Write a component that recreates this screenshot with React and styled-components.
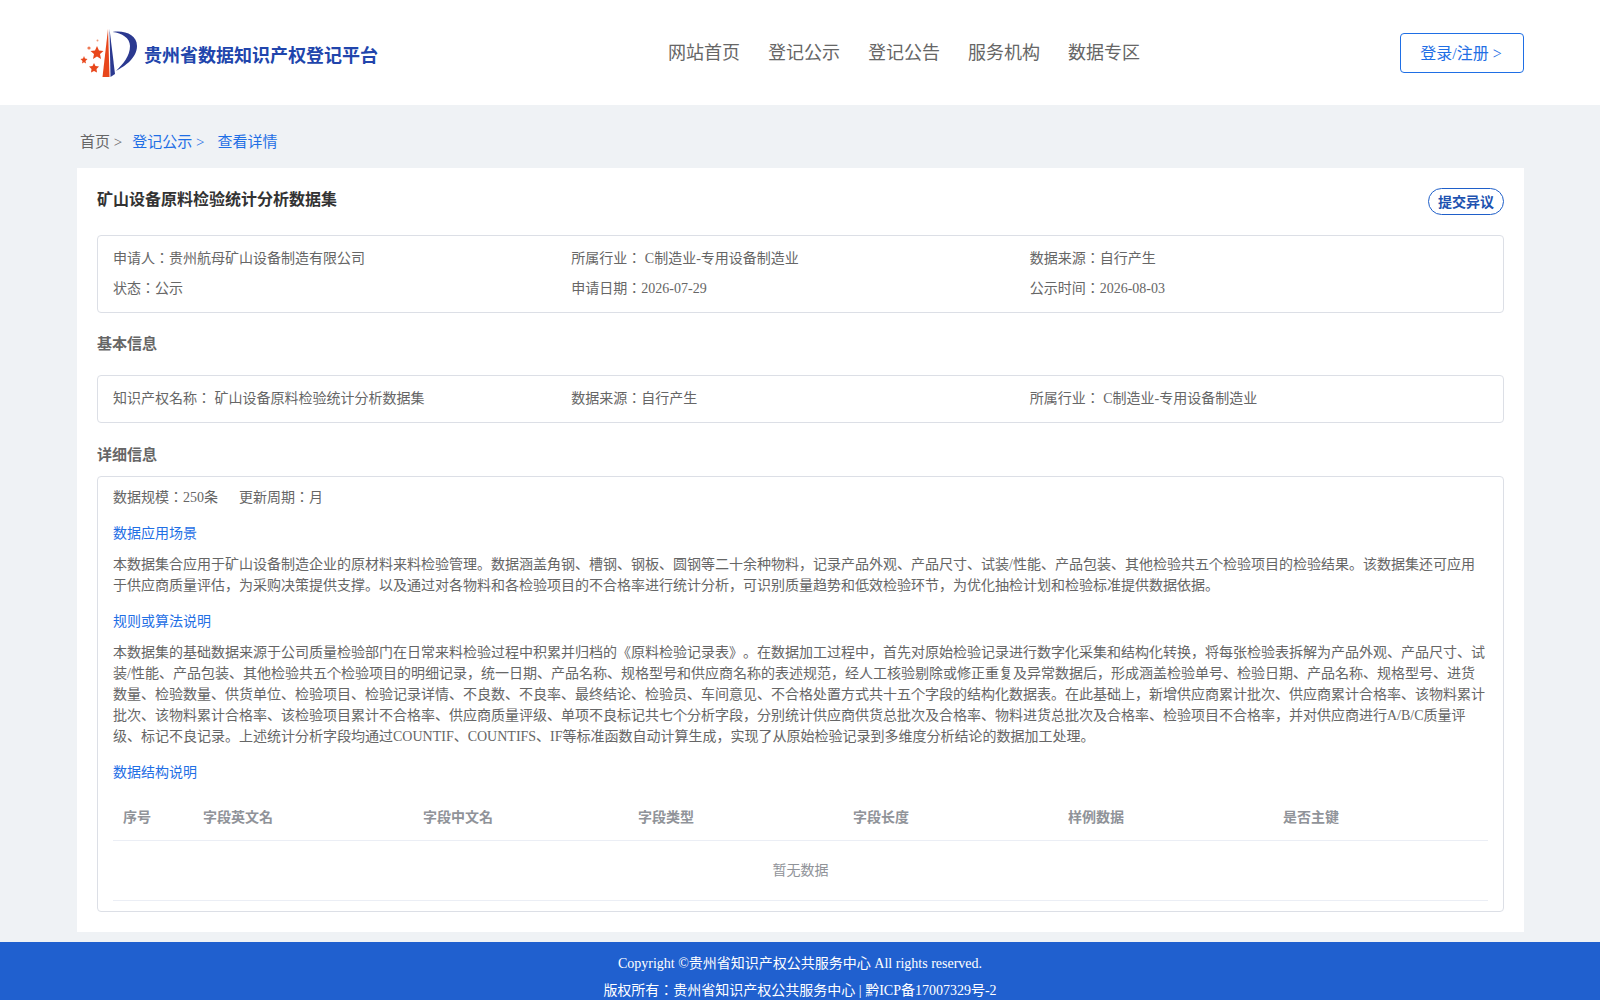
import styled, { createGlobalStyle } from "styled-components";

const GlobalStyle = createGlobalStyle`
  html, body {
    margin: 0;
    padding: 0;
    background: #eff2f5;
    color: #666;
    font-family: "Liberation Serif", "Noto Sans CJK JP", serif;
    font-size: 14px;
    text-spacing-trim: space-all;
  }
  * { box-sizing: border-box; }
`;

const Header = styled.header`
  height: 105px;
  background: #fff;
  padding: 0 76px 0 80px;
  display: flex;
  align-items: center;
  justify-content: space-between;
`;

const Brand = styled.div`
  width: 328px;
  display: flex;
  align-items: center;
  gap: 4px;
  color: #2145ac;
  font-size: 18px;
  font-weight: 700;
  padding-top: 3px;
`;

const Nav = styled.nav`
  display: flex;
  gap: 28px;
  font-size: 18px;
  color: #666;
  line-height: 28px;
`;

const LoginButton = styled.button`
  width: 124px;
  height: 40px;
  background: #fff;
  border: 1px solid #1f6fe5;
  border-radius: 4px;
  color: #1f6fe5;
  font-family: inherit;
  font-size: 16px;
  padding: 0 2px 2px 0;
`;

const Main = styled.main`
  padding: 0 76px 0 77px;
`;

const Breadcrumb = styled.div`
  height: 63px;
  padding: 26px 3px 0;
  line-height: 22px;
  font-size: 15px;
  display: flex;
  gap: 10px;
  color: #666;
`;

const Crumb = styled.span`
  color: ${(p) => (p.$active ? "#1f6fe5" : "#666")};
  margin-left: ${(p) => p.$shift || 0}px;
`;

const Card = styled.section`
  background: #fff;
  padding: 20px;
`;

const TitleRow = styled.div`
  height: 27px;
  margin-bottom: 20px;
  display: flex;
  justify-content: space-between;
  align-items: flex-start;
`;

const Title = styled.h1`
  margin: 0;
  font-size: 16px;
  line-height: 24px;
  color: #333;
`;

const ObjectionButton = styled.button`
  width: 76px;
  height: 27px;
  border: 1px solid #1f5fc9;
  border-radius: 14px;
  background: #fff;
  color: #2052b0;
  font-family: inherit;
  font-size: 14px;
  font-weight: 700;
  padding: 0 0 2px;
`;

const Box = styled.div`
  border: 1px solid #dcdfe6;
  border-radius: 4px;
  padding: ${(p) => p.$padding || "0 15px"};
`;

const InfoGrid = styled.div`
  display: grid;
  grid-template-columns: repeat(3, 1fr);
  grid-auto-rows: 30px;
  align-items: center;
  line-height: 20px;
`;

const SectionTitle = styled.h2`
  margin: 0;
  font-size: 15px;
  line-height: 22px;
  color: #666;
  padding: ${(p) => p.$padding};
`;

const Scale = styled.div`
  display: flex;
  gap: 21px;
  line-height: 20px;
  height: 36px;
`;

const BlueLabel = styled.div`
  color: #1f6fe5;
  line-height: 20px;
  margin-bottom: ${(p) => p.$after || 10}px;
`;

const Paragraph = styled.p`
  margin: 0 0 16px;
  line-height: 21px;
`;

const TableRow = styled.div`
  display: grid;
  grid-template-columns: 80px 220px repeat(5, 1fr);
  height: 50px;
  align-items: center;
  border-bottom: 1px solid #ebeef5;
  color: #909399;
  font-weight: 700;
`;

const Cell = styled.div`
  padding-left: 10px;
`;

const EmptyRow = styled.div`
  height: 60px;
  line-height: 59px;
  text-align: center;
  color: #909399;
  border-bottom: 1px solid #ebeef5;
`;

const Footer = styled.footer`
  margin-top: 10px;
  background: #2060cf;
  color: #fff;
  text-align: center;
  padding: 8px 0;
  line-height: 27px;
`;

function Logo() {
  return (
    <svg width="60" height="52" viewBox="5 8 60 52">
      <path d="M33 9 L27.5 57 L34.5 57 Z" fill="#e8471c" />
      <path d="M34.5 9 L35.5 57 L40 54 Z" fill="#2b3990" />
      <path d="M37.5 12 C50 10 62 15 62 26 C62 38 50 46 41 51 C48 44 55 36 55 26 C55 18 47 13 37.5 12 Z" fill="#2b3990" />
      <polygon points="22,26 24,30.5 28.5,31 25,34 26,39 22,36.5 18,39 19,34 15.5,31 20,30.5" fill="#e8471c" />
      <polygon points="19,43 20.5,46 24,46.5 21.5,49 22,52.5 19,51 16,52.5 16.5,49 14,46.5 17.5,46" fill="#e8471c" />
      <polygon points="9,36 10,38.5 12.5,39 10.5,41 11,43.5 9,42.3 7,43.5 7.5,41 5.5,39 8,38.5" fill="#e8471c" />
      <circle cx="14" cy="28" r="1.6" fill="#ee7a55" />
      <circle cx="22.5" cy="20.5" r="1" fill="#ee9a7a" />
    </svg>
  );
}

const infoRows = [
  "申请人：贵州航母矿山设备制造有限公司",
  "所属行业： C制造业-专用设备制造业",
  "数据来源：自行产生",
  "状态：公示",
  "申请日期：2026-07-29",
  "公示时间：2026-08-03",
];

const basicRows = [
  "知识产权名称： 矿山设备原料检验统计分析数据集",
  "数据来源：自行产生",
  "所属行业： C制造业-专用设备制造业",
];

const columns = ["序号", "字段英文名", "字段中文名", "字段类型", "字段长度", "样例数据", "是否主键"];

function App() {
  return (
    <>
      <GlobalStyle />
      <Header>
        <Brand>
          <Logo />
          贵州省数据知识产权登记平台
        </Brand>
        <Nav>
          <span>网站首页</span>
          <span>登记公示</span>
          <span>登记公告</span>
          <span>服务机构</span>
          <span>数据专区</span>
        </Nav>
        <LoginButton>登录/注册 &gt;</LoginButton>
      </Header>
      <Main>
        <Breadcrumb>
          <Crumb>首页 &gt;</Crumb>
          <Crumb $active>登记公示 &gt;</Crumb>
          <Crumb $active $shift={3}>查看详情</Crumb>
        </Breadcrumb>
        <Card>
          <TitleRow>
            <Title>矿山设备原料检验统计分析数据集</Title>
            <ObjectionButton>提交异议</ObjectionButton>
          </TitleRow>
          <Box $padding="8px 15px">
            <InfoGrid>
              {infoRows.map((t) => (
                <div key={t}>{t}</div>
              ))}
            </InfoGrid>
          </Box>
          <SectionTitle $padding="20px 0 20px">基本信息</SectionTitle>
          <Box $padding="8px 15px">
            <InfoGrid>
              {basicRows.map((t) => (
                <div key={t}>{t}</div>
              ))}
            </InfoGrid>
          </Box>
          <SectionTitle $padding="21px 0 10px">详细信息</SectionTitle>
          <Box $padding="11px 15px 10px">
            <Scale>
              <span>数据规模：250条</span>
              <span>更新周期：月</span>
            </Scale>
            <BlueLabel>数据应用场景</BlueLabel>
            <Paragraph>
              本数据集合应用于矿山设备制造企业的原材料来料检验管理。数据涵盖角钢、槽钢、钢板、圆钢等二十余种物料，记录产品外观、产品尺寸、试装/性能、产品包装、其他检验共五个检验项目的检验结果。该数据集还可应用于供应商质量评估，为采购决策提供支撑。以及通过对各物料和各检验项目的不合格率进行统计分析，可识别质量趋势和低效检验环节，为优化抽检计划和检验标准提供数据依据。
            </Paragraph>
            <BlueLabel>规则或算法说明</BlueLabel>
            <Paragraph>
              本数据集的基础数据来源于公司质量检验部门在日常来料检验过程中积累并归档的《原料检验记录表》。在数据加工过程中，首先对原始检验记录进行数字化采集和结构化转换，将每张检验表拆解为产品外观、产品尺寸、试装/性能、产品包装、其他检验共五个检验项目的明细记录，统一日期、产品名称、规格型号和供应商名称的表述规范，经人工核验剔除或修正重复及异常数据后，形成涵盖检验单号、检验日期、产品名称、规格型号、进货数量、检验数量、供货单位、检验项目、检验记录详情、不良数、不良率、最终结论、检验员、车间意见、不合格处置方式共十五个字段的结构化数据表。在此基础上，新增供应商累计批次、供应商累计合格率、该物料累计批次、该物料累计合格率、该检验项目累计不合格率、供应商质量评级、单项不良标记共七个分析字段，分别统计供应商供货总批次及合格率、物料进货总批次及合格率、检验项目不合格率，并对供应商进行A/B/C质量评级、标记不良记录。上述统计分析字段均通过COUNTIF、COUNTIFS、IF等标准函数自动计算生成，实现了从原始检验记录到多维度分析结论的数据加工处理。
            </Paragraph>
            <BlueLabel $after={8}>数据结构说明</BlueLabel>
            <TableRow>
              {columns.map((c) => (
                <Cell key={c}>{c}</Cell>
              ))}
            </TableRow>
            <EmptyRow>暂无数据</EmptyRow>
          </Box>
        </Card>
      </Main>
      <Footer>
        <div>Copyright ©贵州省知识产权公共服务中心 All rights reserved.</div>
        <div>版权所有：贵州省知识产权公共服务中心 | 黔ICP备17007329号-2</div>
      </Footer>
    </>
  );
}

export default App;
